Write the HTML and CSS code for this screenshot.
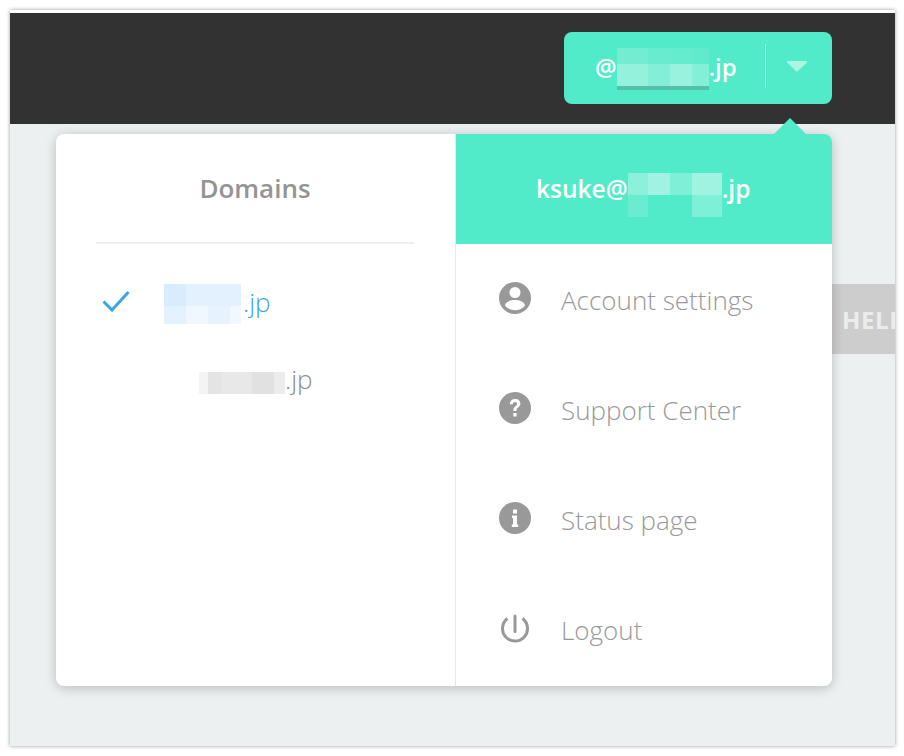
FILE: index.html
```html
<!DOCTYPE html>
<html lang="en">
<head>
<meta charset="utf-8">
<title>Account menu</title>
<link rel="stylesheet" href="styles.css">
</head>
<body>
<div class="window">
  <header class="topbar">
    <button class="account-btn">
      <span class="account-name">@<span class="mosaic mosaic-btn"></span>.jp</span>
      <span class="btn-divider"></span>
      <svg class="caret" viewBox="0 0 22 12" width="22" height="12"><path d="M2 2 H20 L11 10.5Z" fill="#aaf6e5" stroke="#aaf6e5" stroke-width="2" stroke-linejoin="round"/></svg>
    </button>
  </header>
  <main class="content">
    <a class="help-tab">HELP</a>
    <div class="dropdown">
      <span class="dropdown-arrow"></span>
      <section class="domains">
        <h2 class="domains-title">Domains</h2>
        <ul class="domain-list">
          <li class="domain domain-active">
            <svg class="check" viewBox="0 0 28 22" width="28" height="22"><path d="M1.5 11.5 L10 20 L26.5 2" fill="none" stroke="#39a5ee" stroke-width="3"/></svg>
            <span class="mosaic mosaic-d1"></span><span>.jp</span>
          </li>
          <li class="domain domain-second">
            <span class="mosaic mosaic-d2"></span><span>.jp</span>
          </li>
        </ul>
      </section>
      <section class="account">
        <div class="account-head">ksuke@<span class="mosaic mosaic-head"></span>.jp</div>
        <nav class="menu">
          <a class="menu-item">
            <svg class="icon" viewBox="0 0 32 32"><circle cx="16" cy="16" r="16" fill="#999"/><circle cx="16" cy="10.5" r="5.5" fill="#fff"/><path d="M5.8 23.2 C8 19 12 18 16 18 C20 18 24 19 26.2 23.2 C24 26.5 20 28.2 16 28.2 C12 28.2 8 26.5 5.8 23.2Z" fill="#fff"/></svg>
            <span>Account settings</span>
          </a>
          <a class="menu-item">
            <svg class="icon" viewBox="0 0 32 32"><circle cx="16" cy="16" r="16" fill="#999"/><path d="M10.8 12.2 C10.9 8.9 13 7 16.1 7 C19.3 7 21.4 8.9 21.4 11.6 C21.4 13.7 20.2 14.8 18.8 15.8 C17.7 16.6 17.5 17.2 17.5 19 L14.4 19 C14.4 16.5 14.9 15.3 16.6 14 C17.7 13.2 18.1 12.7 18.1 11.8 C18.1 10.6 17.3 9.9 16 9.9 C14.7 9.9 13.9 10.8 13.8 12.2Z" fill="#fff"/><rect x="14.3" y="21" width="3.3" height="3.5" fill="#fff"/></svg>
            <span>Support Center</span>
          </a>
          <a class="menu-item">
            <svg class="icon" viewBox="0 0 32 32"><circle cx="16" cy="16" r="16" fill="#999"/><rect x="14" y="7.5" width="4" height="4" fill="#fff"/><path d="M13 13.5 H18 V22.5 H19.2 V25 H12.8 V22.5 H14 V16 H13Z" fill="#fff"/></svg>
            <span>Status page</span>
          </a>
          <a class="menu-item">
            <svg class="icon" viewBox="0 0 32 32"><path d="M8.5 6.5 A12.5 12.5 0 1 0 23.5 6.5" fill="none" stroke="#999" stroke-width="3"/><path d="M16 4 V19.5" fill="none" stroke="#999" stroke-width="3" stroke-linecap="round"/></svg>
            <span>Logout</span>
          </a>
        </nav>
      </section>
    </div>
  </main>
</div>
</body>
</html>
```
FILE: styles.css
```css
* { box-sizing: border-box; }
html, body { margin: 0; padding: 0; background: #fff; }
body {
  width: 904px;
  height: 756px;
  padding: 10px 0 0 10px;
  overflow: hidden;
  font-family: "Open Sans", "Liberation Sans", sans-serif;
}
.window {
  width: 885px;
  height: 736px;
  display: flex;
  flex-direction: column;
  background: #ecf0f1;
  border-top: 3px solid #fff;
  box-shadow: 0 0 4px rgba(0, 0, 0, 0.4);
  overflow: hidden;
}
.topbar {
  height: 111px;
  flex: none;
  background: #323232;
  display: flex;
  justify-content: flex-end;
  align-items: flex-start;
  padding: 19px 63px 0 0;
}
.account-btn {
  width: 268px;
  height: 72px;
  display: flex;
  align-items: center;
  padding: 0 0 0 31px;
  border: 0;
  border-radius: 8px;
  background: #52ebc9;
  color: #fff;
  font: 600 24px/32px "Open Sans", "Liberation Sans", sans-serif;
}
.account-name { display: flex; align-items: center; flex: none; width: 170px; margin-top: -2px; }
.btn-divider { flex: none; width: 1px; height: 44px; margin: -4px 20px 0 0; background: #b5f6e7; }
.caret { flex: none; margin-top: -4px; }
.mosaic { display: inline-block; flex: none; background-repeat: no-repeat; }
.mosaic-btn {
  width: 92px;
  height: 42px;
  margin-top: 4px;
  background-image:
    linear-gradient(#55c0a8, #55c0a8),
    linear-gradient(90deg, #94f1dc 0 31px, #84efd8 31px 53px, #98f2de 53px 75px, #82efd6 75px),
    linear-gradient(90deg, #72edd2 0 31px, #68ebcf 31px 53px, #65ebce 53px 75px, #5febcc 75px);
  background-size: 100% 4px, 100% 22px, 100% 16px;
  background-position: 0 38px, 0 16px, 0 0;
}
.content { position: relative; flex: 1; }
.help-tab {
  position: absolute;
  left: 822px;
  top: 160px;
  width: 80px;
  height: 70px;
  padding-left: 10px;
  background: #cdcdcd;
  color: #ececec;
  font-weight: 700;
  font-size: 24px;
  letter-spacing: 0.6px;
  line-height: 72px;
}
.dropdown {
  position: absolute;
  left: 46px;
  top: 10px;
  width: 776px;
  height: 552px;
  display: flex;
  background: #fff;
  border-radius: 8px;
  box-shadow: 0 2px 12px rgba(0, 0, 0, 0.22);
}
.dropdown-arrow {
  position: absolute;
  left: 718px;
  top: -16px;
  width: 32px;
  height: 16px;
  background: #52ebc9;
  clip-path: polygon(50% 0, 100% 100%, 0 100%);
}
.domains {
  width: 400px;
  flex: none;
  padding: 0 41px 0 40px;
  border-right: 1px solid #e8e8e8;
}
.domains-title {
  margin: 0;
  height: 110px;
  border-bottom: 2px solid #eeeeee;
  text-align: center;
  color: #949494;
  font-size: 26px;
  font-weight: 600;
  line-height: 108px;
}
.domain-list { list-style: none; margin: 0; padding: 0; }
.domain {
  height: 80px;
  display: flex;
  align-items: center;
  font-size: 26px;
  font-weight: 300;
  color: #8c8c8c;
}
.domain-active { color: #39a5ee; margin-top: 18px; margin-left: -34px; padding-left: 40px; }
.check { flex: none; margin-right: 34px; margin-top: -3px; }
.domain-second { padding-left: 103px; margin-top: -3px; }
.mosaic-d1 {
  width: 77px;
  height: 40px;
  margin-top: 4px;
  margin-right: 2px;
  background-image:
    linear-gradient(90deg, #d9ecfd 0 22px, #e3f1fe 22px),
    linear-gradient(90deg, #e3f2fe 0 22px, #f0f7ff 22px 44px, #e6f3ff 44px 66px, #f2f8ff 66px);
  background-size: 100% 22px, 100% 18px;
  background-position: 0 0, 0 22px;
}
.mosaic-d2 {
  width: 86px;
  height: 22px;
  margin-top: 7px;
  background-image: linear-gradient(90deg, #f4f4f4 0 9px, #e4e4e4 9px 23px, #e8e8e8 23px 53px, #e1e1e1 53px 75px, #ececec 75px);
}
.account { flex: 1; min-width: 0; display: flex; flex-direction: column; }
.account-head {
  height: 110px;
  flex: none;
  display: flex;
  align-items: center;
  padding: 0 0 2px 80px;
  background: #52ebc9;
  border-radius: 0 8px 0 0;
  color: #fff;
  font-size: 24.5px;
  font-weight: 600;
}
.mosaic-head {
  width: 94px;
  height: 44px;
  margin-top: 14px;
  background-image:
    linear-gradient(90deg, #8cf0da 0 20px, #a0f3e1 20px 42px, #80efd7 42px 64px, #a0f3e1 64px),
    linear-gradient(90deg, #6aecd0 0 20px, #52ebc9 20px 64px, #7df0d7 64px);
  background-size: 100% 22px, 100% 22px;
  background-position: 0 0, 0 22px;
}
.menu { padding-top: 1px; }
.menu-item {
  height: 110px;
  display: flex;
  align-items: center;
  gap: 30px;
  padding-left: 43px;
  color: #999;
  font-size: 26px;
  font-weight: 300;
}
.icon { width: 32px; height: 32px; flex: none; margin-top: -4px; }
```
